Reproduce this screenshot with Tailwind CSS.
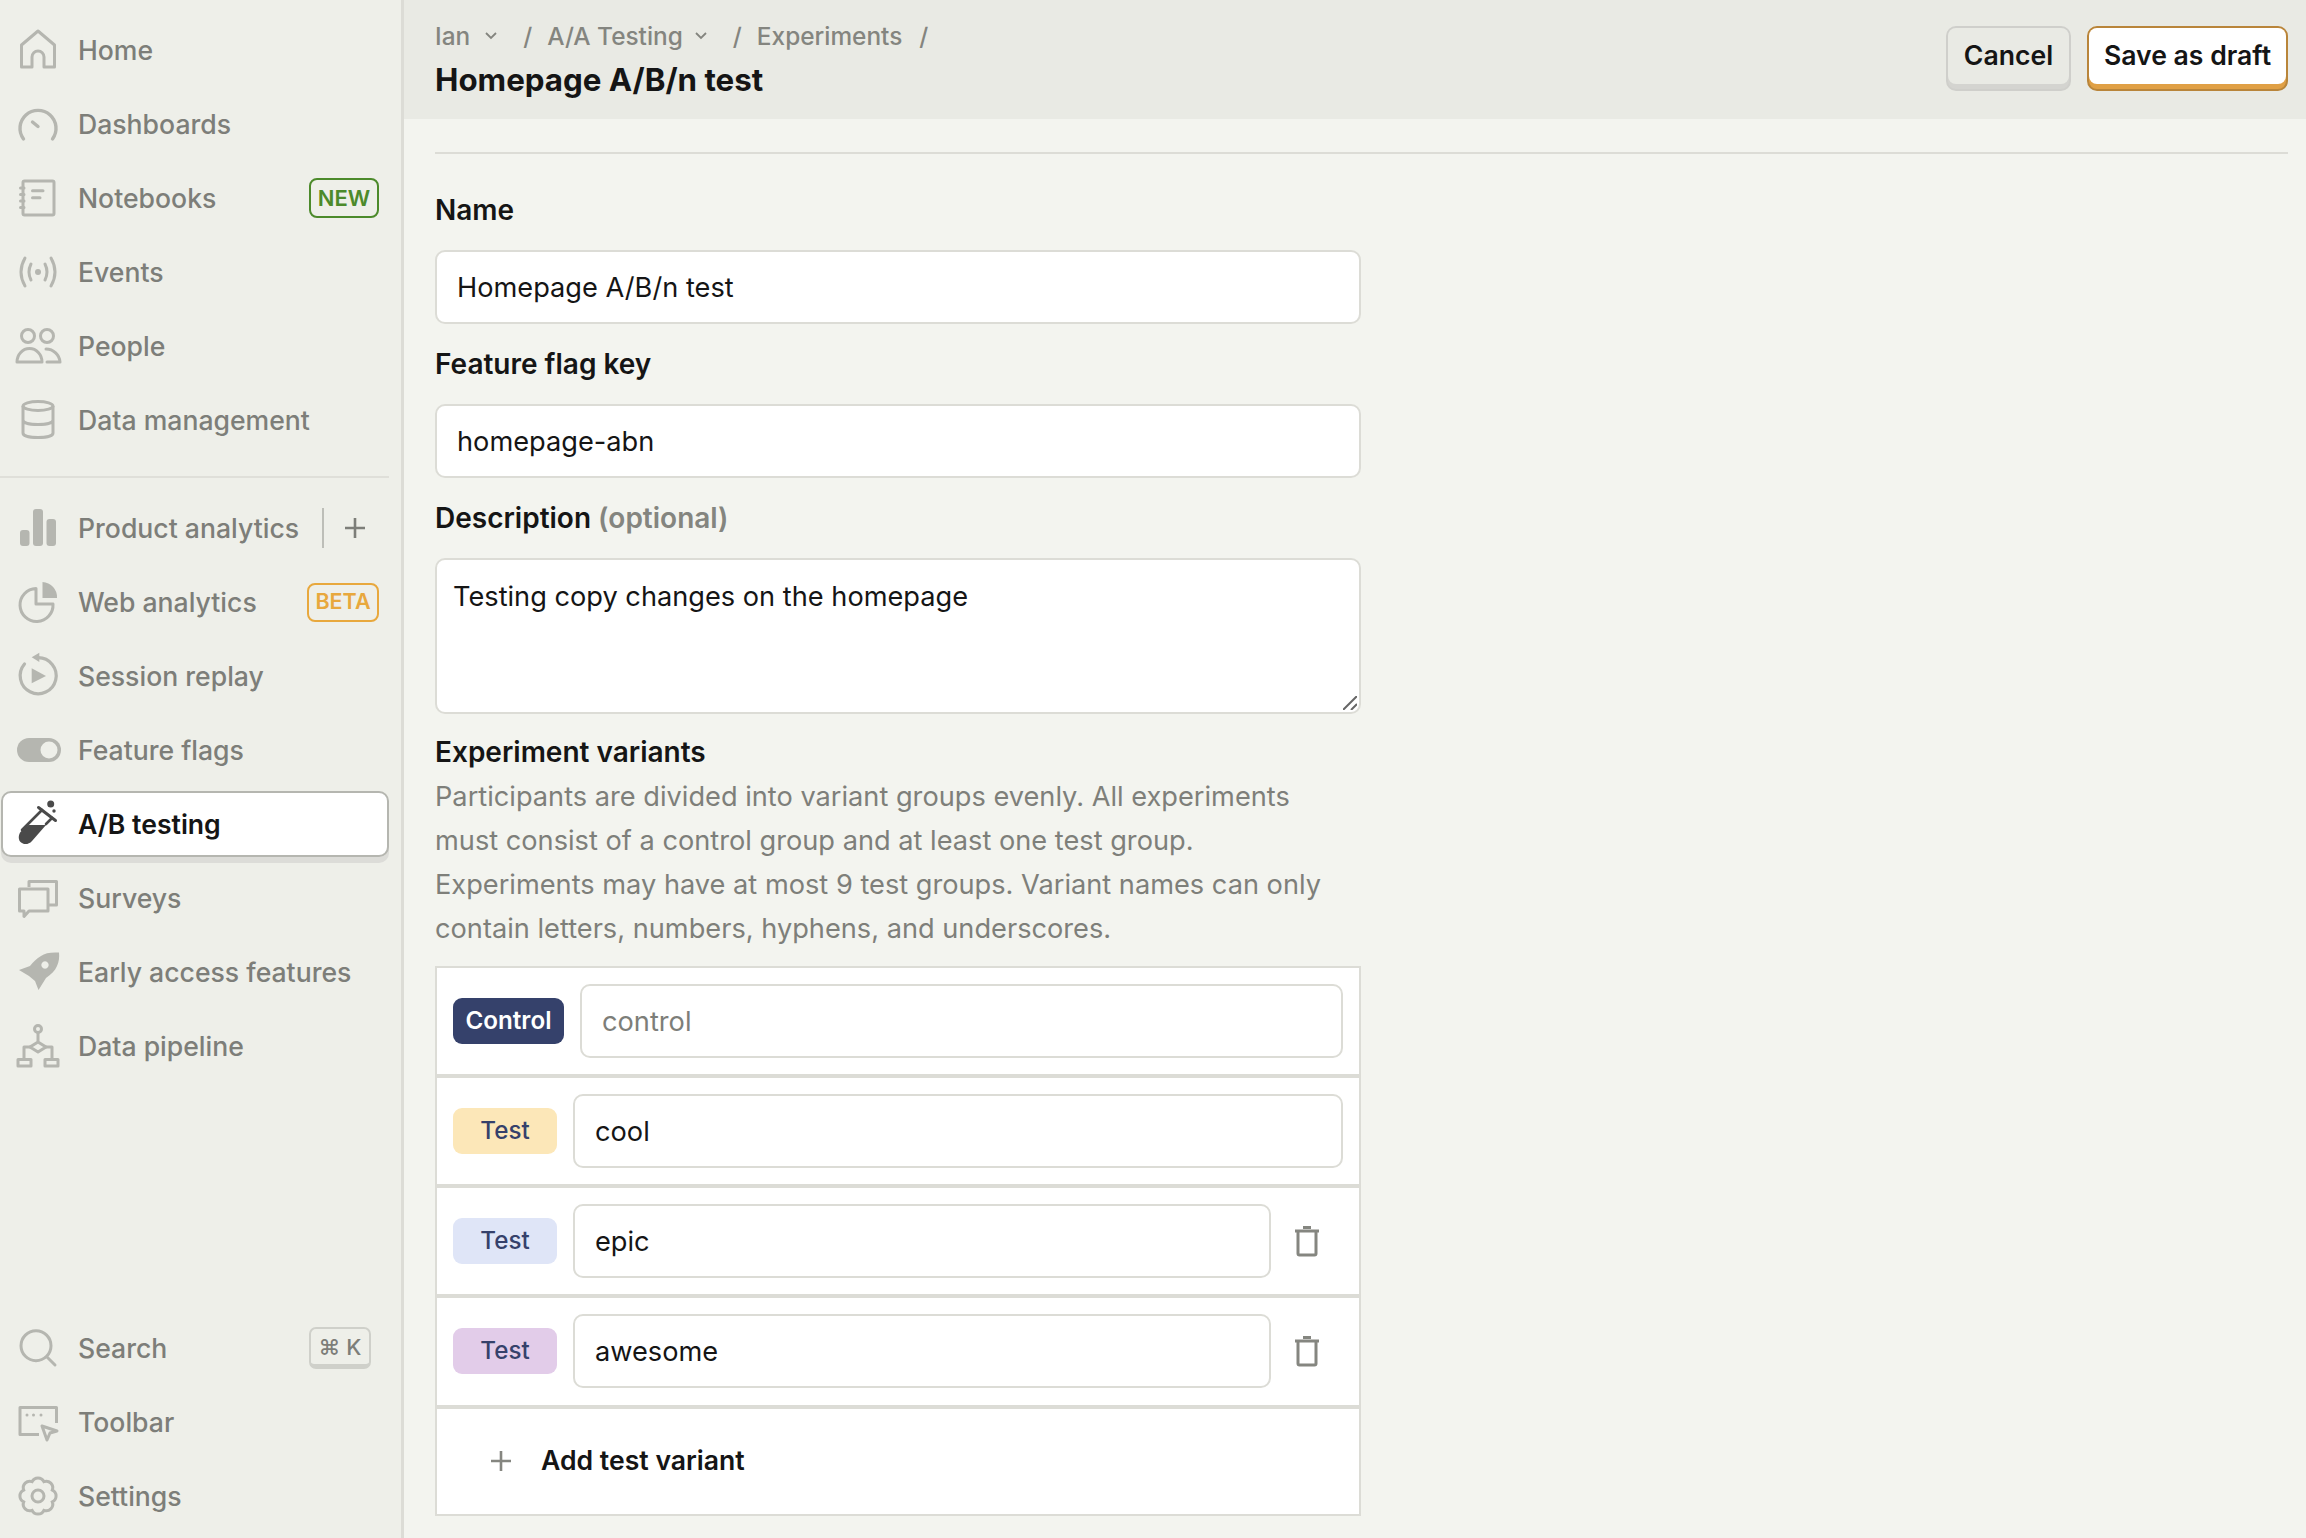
<!DOCTYPE html>
<html lang="en">
  <head>
    <meta charset="UTF-8" />
    <meta name="viewport" content="width=device-width, initial-scale=1.0" />
    <script src="https://cdn.jsdelivr.net/npm/@tailwindcss/browser@4"></script>
    <title>Homepage A/B/n test</title>
  </head>
  <body class="bg-[#f3f4ef] font-[Inter,'DejaVu_Sans',sans-serif] text-[#151515]">
    <div class="flex h-[1538px] w-[2306px] overflow-hidden">
      <!-- sidebar -->
      <aside class="flex w-[404px] shrink-0 flex-col whitespace-nowrap border-r-[3px] border-[#dcdcd6] bg-[#eeefe9] pb-[9px] pl-[1px] pr-[12px] pt-[17px] text-[26.600px] font-medium leading-none text-[#7d7e79]">
        <a class="flex h-[66px] items-center gap-[20px] pl-[17px]">
          <svg class="overflow-visible" width="40" height="40" viewBox="0 0 40 40" fill="none" stroke="#b5b6b0" stroke-width="3" stroke-linejoin="round"><path d="M3.5 37V15L20 1L36.5 15V37H26V27a6 6 0 0 0-12 0V37Z" /></svg>
          <span class="pt-px">Home</span>
        </a>
        <a class="mt-[8px] flex h-[66px] items-center gap-[20px] pl-[17px]">
          <svg class="overflow-visible" width="40" height="40" viewBox="0 0 40 40" fill="none" stroke="#b5b6b0" stroke-width="3.4" stroke-linecap="round"><path d="M5.5 35A18 18 0 1 1 34.5 35" /><path d="M14.5 18L20 22.5" /></svg>
          <span class="pt-px">Dashboards</span>
        </a>
        <a class="mt-[8px] flex h-[66px] items-center gap-[20px] pl-[17px]">
          <svg class="overflow-visible" width="40" height="40" viewBox="0 0 40 40" fill="none" stroke="#b5b6b0" stroke-width="3" stroke-linecap="round"><rect x="5" y="3" width="31" height="34" rx="1.5" /><path d="M14.5 12.7H25M14.5 19.7H22M2.5 10H6M2.5 16.5H6M2.5 23H6M2.5 29.5H6" /></svg>
          <span class="pt-px">Notebooks</span>
          <span class="ml-auto mr-[10px] flex h-[40px] w-[70px] items-center justify-center rounded-[8px] border-2 border-[#4c8a2b] text-[22px] font-semibold text-[#4c8a2b]">NEW</span>
        </a>
        <a class="mt-[8px] flex h-[66px] items-center gap-[20px] pl-[17px]">
          <svg class="overflow-visible" width="40" height="40" viewBox="0 0 40 40" fill="none" stroke="#b5b6b0" stroke-width="3" stroke-linecap="round"><path d="M7 6Q-1 20 7 34M33 6Q41 20 33 34M13 12Q9 20 13 28M27 12Q31 20 27 28" /><circle cx="20" cy="20" r="3" fill="#b5b6b0" stroke="none" /></svg>
          <span class="pt-px">Events</span>
        </a>
        <a class="mt-[8px] flex h-[66px] items-center gap-[20px] pl-[17px]">
          <svg class="overflow-visible" width="40" height="40" viewBox="0 0 40 40" fill="none" stroke="#b5b6b0" stroke-width="3" stroke-linejoin="round" stroke-linecap="round"><circle cx="10" cy="10" r="6.5" /><circle cx="29" cy="10" r="6.5" /><path d="M-1 36a12.5 13.5 0 0 1 25 0Z" /><path d="M28 23c7.500 0 13.500 6 14 13H29" /></svg>
          <span class="pt-px">People</span>
        </a>
        <a class="mt-[8px] flex h-[66px] items-center gap-[20px] pl-[17px]">
          <svg class="overflow-visible" width="40" height="40" viewBox="0 0 40 40" fill="none" stroke="#b5b6b0" stroke-width="3"><ellipse cx="20" cy="6" rx="15" ry="4.500" /><path d="M5 6V33c0 3 7 4.500 15 4.500S35 36 35 33V6M5 20c0 3 7 4.500 15 4.500S35 23 35 20" /></svg>
          <span class="pt-px">Data management</span>
        </a>

        <div class="ml-[-1px] mt-[23px] h-[2px] w-[389px] shrink-0 bg-[#dfdfd9]"></div>

        <a class="mt-[17px] flex h-[66px] items-center gap-[20px] pl-[17px]">
          <svg class="overflow-visible" width="40" height="40" viewBox="0 0 40 40" fill="#b5b6b0"><rect x="2" y="22" width="9.500" height="16" rx="3" /><rect x="15" y="1" width="10" height="37" rx="3" /><rect x="28.500" y="11" width="9.500" height="27" rx="3" /></svg>
          <span class="pt-px">Product analytics</span>
          <span class="ml-auto h-[40px] w-[2px] bg-[#bdbeb8]"></span>
          <svg class="ml-px mr-[24px]" width="20" height="20" viewBox="0 0 20 20" fill="none" stroke="#7d7e79" stroke-width="2.600"><path d="M10 0V20M0 10H20" /></svg>
        </a>
        <a class="mt-[8px] flex h-[66px] items-center gap-[20px] pl-[17px]">
          <svg class="overflow-visible" width="40" height="40" viewBox="0 0 40 40" fill="none" stroke="#b5b6b0" stroke-width="3"><path d="M18 6.500A16.500 16.500 0 1 0 35 22H18Z" stroke-linejoin="round" /><path d="M24.500 0A15 15 0 0 1 39 16H24.500Z" fill="#b5b6b0" stroke="none" /></svg>
          <span class="pt-px">Web analytics</span>
          <span class="ml-auto mr-[10px] flex h-[39px] w-[72px] items-center justify-center rounded-[8px] border-2 border-[#e8a83d] text-[21.500px] font-semibold text-[#e8a83d]">BETA</span>
        </a>
        <a class="mt-[8px] flex h-[66px] items-center gap-[20px] pl-[17px]">
          <svg class="overflow-visible" width="40" height="40" viewBox="0 0 40 40" fill="none" stroke="#b5b6b0" stroke-width="3.200"><path d="M6.500 8A18 18 0 1 0 20 1.700" stroke-linecap="round" /><path d="M21.300 -3.300L13.700 1.300L21.300 6Z" fill="#b5b6b0" stroke="none" /><path d="M13.700 12.300L28 20L13.700 27.300Z" fill="#b5b6b0" stroke="none" /></svg>
          <span class="pt-px">Session replay</span>
        </a>
        <a class="mt-[8px] flex h-[66px] items-center gap-[20px] pl-[17px]">
          <svg class="overflow-visible" width="40" height="40" viewBox="0 0 40 40"><rect x="-1" y="8" width="44" height="24" rx="12" fill="#b5b6b0" /><circle cx="31" cy="20" r="8.500" fill="#eeefe9" /></svg>
          <span class="pt-px">Feature flags</span>
        </a>
        <a class="mt-[8px] flex h-[66px] items-center gap-[20px] rounded-[10px] border-2 border-[#b5b6b0] bg-white pl-[15px] font-semibold text-[#151515] shadow-[0_6px_0_0_#dcdcd8]">
          <svg class="overflow-visible" width="40" height="40" viewBox="0 0 40 40" fill="none" stroke="#4a4a4a" stroke-width="2.600" stroke-linecap="round"><path d="M4 26L24 6M28 20L34 14" /><path d="M20.500 3.500L37.500 16.500" stroke-width="3" /><path d="M10.500 21H28L14 37C10 41.500 4.500 40.500 2 37.500C0 34.500 .5 30 3 27.500Z" fill="#4a4a4a" stroke="none" /><circle cx="32.700" cy="0" r="3.500" fill="#4a4a4a" stroke="none" /><circle cx="36" cy="7" r="1.700" fill="#4a4a4a" stroke="none" /></svg>
          <span class="pt-px">A/B testing</span>
        </a>
        <a class="mt-[8px] flex h-[66px] items-center gap-[20px] pl-[17px]">
          <svg class="overflow-visible" width="40" height="40" viewBox="0 0 40 40" fill="none" stroke="#b5b6b0" stroke-width="3" stroke-linejoin="round"><path d="M11 9V3.500H38.500V27H30" /><path d="M1.500 11H30V33H11L6 38.500V33H1.500Z" /></svg>
          <span class="pt-px">Surveys</span>
        </a>
        <a class="mt-[8px] flex h-[66px] items-center gap-[20px] pl-[17px]">
          <svg class="overflow-visible" width="40" height="40" viewBox="0 0 40 40" fill="#b5b6b0" fill-rule="evenodd"><path d="M41 .5C33 0 27 1 23 4C18 7 15 10 12 14L1 18L11 24L17 29L20.500 38L28 26C33 22 37 19 39 14C41 10 41.500 5 41 .5ZM27 9.300a3.700 3.700 0 1 0 .01 0Z" /></svg>
          <span class="pt-px">Early access features</span>
        </a>
        <a class="mt-[8px] flex h-[66px] items-center gap-[20px] pl-[17px]">
          <svg class="overflow-visible" width="40" height="40" viewBox="0 0 40 40" fill="none" stroke="#b5b6b0" stroke-width="3" stroke-linejoin="round"><circle cx="20" cy="3" r="3.500" /><path d="M20 6.500V16M20 16L28 21L20 26L12 21Z" /><path d="M13 21H6V33M27 21H34V33" /><rect x="0" y="33.500" width="13" height="6.500" /><rect x="27" y="33.500" width="13" height="6.500" /></svg>
          <span class="pt-px">Data pipeline</span>
        </a>

        <a class="mt-auto flex h-[66px] items-center gap-[20px] pl-[17px]">
          <svg class="overflow-visible" width="40" height="40" viewBox="0 0 40 40" fill="none" stroke="#b5b6b0" stroke-width="3" stroke-linecap="round"><circle cx="18" cy="17.700" r="15" /><path d="M29 29L37 37" /></svg>
          <span class="pt-px">Search</span>
          <span class="ml-auto mr-[18px] flex h-[42px] w-[62px] items-center justify-center rounded-[7px] border-2 border-b-[5px] border-[#cfd0ca] pt-[1px] text-[22px] text-[#7d7e79]">⌘ K</span>
        </a>
        <a class="mt-[8px] flex h-[66px] items-center gap-[20px] pl-[17px]">
          <svg class="overflow-visible" width="40" height="40" viewBox="0 0 40 40" fill="none" stroke="#b5b6b0" stroke-width="3" stroke-linejoin="round"><path d="M21 32.500H2V5.500H38.500V21" /><path d="M24 24L39 29L32 31L29 38Z" /><circle cx="9" cy="13" r="1.500" fill="#b5b6b0" stroke="none" /><circle cx="15.500" cy="13" r="1.500" fill="#b5b6b0" stroke="none" /><circle cx="23" cy="13" r="1.500" fill="#b5b6b0" stroke="none" /></svg>
          <span class="pt-px">Toolbar</span>
        </a>
        <a class="mt-[8px] flex h-[66px] items-center gap-[20px] pl-[17px]">
          <svg class="overflow-visible" width="40" height="40" viewBox="0 0 40 40" fill="none" stroke="#b5b6b0" stroke-width="3"><circle cx="20" cy="20" r="6" /><path d="M34.300 25.900A6.500 6.500 0 0 1 25.900 34.300A6.500 6.500 0 0 1 14.100 34.300A6.500 6.500 0 0 1 5.700 25.900A6.500 6.500 0 0 1 5.700 14.100A6.500 6.500 0 0 1 14.100 5.700A6.500 6.500 0 0 1 25.900 5.700A6.500 6.500 0 0 1 34.300 14.100A6.500 6.500 0 0 1 34.300 25.900Z" /></svg>
          <span class="pt-px">Settings</span>
        </a>
      </aside>

      <main class="min-w-0 flex-1">
        <header class="flex h-[119px] items-start justify-between bg-[#e9eae4] pl-[31px] pr-[18px]">
          <div>
            <div class="mt-[20px] flex h-[32px] items-center text-[24.400px] font-medium text-[#84857f]">
              <span>Ian</span>
              <svg class="ml-[15px]" width="12" height="8" viewBox="0 0 12 8" fill="none" stroke="#84857f" stroke-width="1.800"><path d="M1 1L6 6L11 1" /></svg>
              <span class="ml-[26px]">/</span>
              <span class="ml-[15px]">A/A Testing</span>
              <svg class="ml-[12px]" width="12" height="8" viewBox="0 0 12 8" fill="none" stroke="#84857f" stroke-width="1.800"><path d="M1 1L6 6L11 1" /></svg>
              <span class="ml-[26px]">/</span>
              <span class="ml-[15px]">Experiments</span>
              <span class="ml-[17px]">/</span>
            </div>
            <h1 class="mt-[8px] text-[31.300px] font-bold leading-[40px]">Homepage A/B/n test</h1>
          </div>
          <div class="mt-[26px] flex gap-[16px] text-[26.600px] font-semibold">
            <button class="h-[65px] w-[125px] rounded-[10px] border-2 border-[#cfcfcb] bg-[#d4d4d0] pb-[5px]">
              <span class="flex h-full items-center justify-center rounded-[8px] bg-[#e9eae4]">Cancel</span>
            </button>
            <button class="h-[65px] w-[201px] rounded-[10px] border-2 border-[#b9853a] bg-[#e0a045] pb-[5px]">
              <span class="flex h-full items-center justify-center rounded-[8px] bg-white">Save as draft</span>
            </button>
          </div>
        </header>

        <div class="pl-[31px] pr-[18px] pt-[33px]">
          <div class="h-[2px] bg-[#dcdcd6]"></div>

          <form class="w-[926px]">
            <label class="mt-[36px] block text-[28px] font-semibold leading-[40px]">Name</label>
            <input value="Homepage A/B/n test" class="mt-[20px] block h-[74px] w-full rounded-[10px] border-2 border-[#dcdcd6] bg-white px-[20px] text-[27.200px]" />

            <label class="mt-[20px] block text-[28px] font-semibold leading-[40px]">Feature flag key</label>
            <input value="homepage-abn" class="mt-[20px] block h-[74px] w-full rounded-[10px] border-2 border-[#dcdcd6] bg-white px-[20px] text-[27.200px]" />

            <label class="mt-[20px] block text-[28px] font-semibold leading-[40px]">Description <span class="text-[#84857f]">(optional)</span></label>
            <div class="relative mt-[20px]">
              <textarea class="block h-[156px] w-full resize-none rounded-[10px] border-2 border-[#dcdcd6] bg-white px-[16px] pb-[16px] pt-[17px] text-[27.200px] leading-[40px]">Testing copy changes on the homepage</textarea>
              <svg class="absolute bottom-[4px] right-[4px]" width="14" height="14" viewBox="0 0 14 14" fill="none" stroke="#666" stroke-width="2"><path d="M0 14L14 0M8 14L14 8" /></svg>
            </div>

            <label class="mt-[18px] block text-[28px] font-semibold leading-[40px]">Experiment variants</label>
            <p class="mb-[15px] mt-[3px] pr-[20px] text-[27.200px] leading-[44px] text-[#7e7f7a]">Participants are divided into variant groups evenly. All experiments must consist of a control group and at least one test group. Experiments may have at most 9 test groups. Variant names can only contain letters, numbers, hyphens, and underscores.</p>

            <div class="border-2 border-[#dcdcd6] bg-white">
              <div class="flex h-[110px] items-center gap-[16px] border-b-4 border-[#dcdcd6] px-[16px]">
                <span class="flex h-[46px] w-[111px] items-center justify-center rounded-[9px] bg-[#35416b] text-[24.200px] font-semibold text-white">Control</span>
                <input placeholder="control" class="h-[74px] min-w-0 flex-1 rounded-[10px] border-2 border-[#dcdcd6] bg-white px-[20px] text-[27.200px] placeholder:text-[#7d7e79]" />
              </div>
              <div class="flex h-[110.200px] items-center gap-[16px] border-b-4 border-[#dcdcd6] px-[16px]">
                <span class="flex h-[46px] w-[104px] items-center justify-center rounded-[9px] bg-[#fce7b8] text-[24.200px] font-medium text-[#35416b]">Test</span>
                <input value="cool" class="h-[74px] min-w-0 flex-1 rounded-[10px] border-2 border-[#dcdcd6] bg-white px-[20px] text-[27.200px]" />
              </div>
              <div class="flex h-[110.200px] items-center gap-[16px] border-b-4 border-[#dcdcd6] px-[16px]">
                <span class="flex h-[46px] w-[104px] items-center justify-center rounded-[9px] bg-[#dfe5f7] text-[24.200px] font-medium text-[#35416b]">Test</span>
                <input value="epic" class="h-[74px] min-w-0 flex-1 rounded-[10px] border-2 border-[#dcdcd6] bg-white px-[20px] text-[27.200px]" />
                <svg class="ml-[7px] mr-[23px]" width="26" height="32" viewBox="0 0 26 32" fill="none" stroke="#858680" stroke-width="3"><path d="M9 2.500H17M1 6H25" /><path d="M4 7V28.500a1.500 1.500 0 0 0 1.500 1.500H20.500a1.500 1.500 0 0 0 1.500-1.500V7" /></svg>
              </div>
              <div class="flex h-[110.200px] items-center gap-[16px] border-b-4 border-[#dcdcd6] px-[16px]">
                <span class="flex h-[46px] w-[104px] items-center justify-center rounded-[9px] bg-[#e2cce9] text-[24.200px] font-medium text-[#35416b]">Test</span>
                <input value="awesome" class="h-[74px] min-w-0 flex-1 rounded-[10px] border-2 border-[#dcdcd6] bg-white px-[20px] text-[27.200px]" />
                <svg class="ml-[7px] mr-[23px]" width="26" height="32" viewBox="0 0 26 32" fill="none" stroke="#858680" stroke-width="3"><path d="M9 2.500H17M1 6H25" /><path d="M4 7V28.500a1.500 1.500 0 0 0 1.500 1.500H20.500a1.500 1.500 0 0 0 1.500-1.500V7" /></svg>
              </div>
              <div class="flex h-[105px] items-center pl-[54px] text-[26.600px] font-semibold">
                <svg width="20" height="20" viewBox="0 0 20 20" fill="none" stroke="#858680" stroke-width="2.600"><path d="M10 0V20M0 10H20" /></svg>
                <span class="ml-[30px]">Add test variant</span>
              </div>
            </div>
          </form>
        </div>
      </main>
    </div>
  </body>
</html>
